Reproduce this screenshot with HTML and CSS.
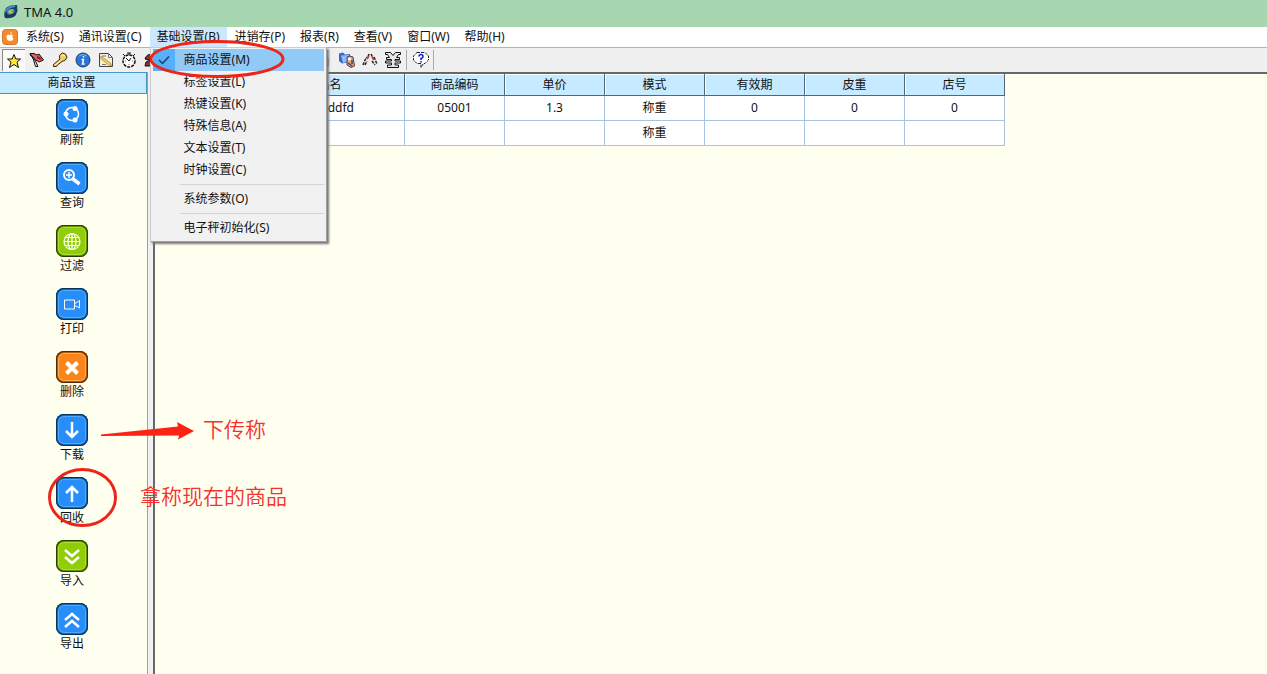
FILE: index.html
```html
<!DOCTYPE html>
<html lang="zh-CN">
<head>
<meta charset="utf-8">
<title>TMA 4.0</title>
<link rel="stylesheet" href="styles.css">
</head>
<body>
<header class="titlebar">
  <svg class="logo" viewBox="0 0 16 16" width="16" height="16"><path d="M3 4Q6 1 14 1Q15 5 13 11Q9 15 2 14Q0 11 3 4Z" fill="#1d4258"/><path d="M2 8Q4 3 12 2" stroke="#3e91c5" stroke-width="2" fill="none"/><ellipse cx="8" cy="8" rx="4" ry="3" fill="#3a8fcf"/><path d="M5 8Q6 5 11 5L9 7L11 9L7 10Z" fill="#b8b851"/><path d="M2 12Q10 13 14 6" stroke="#163c66" stroke-width="2" fill="none"/></svg>
  <h1 class="title">TMA 4.0</h1>
</header>
<nav class="menubar">
  <svg class="app" viewBox="0 0 16 16" width="16" height="16"><rect x=".5" y=".5" width="15" height="15" rx="3" fill="#f58a2b" stroke="#d5772b"/><path d="M8 6Q5 4.500 4.500 7.500Q4.500 11 7 12L8 11.500L9.500 12Q11 11 11.500 9.500Q9.500 8.500 11 6.500Q10 5 8 6ZM8 5Q8 3 10 3Q10 5 8 5Z" fill="#fff"/></svg>
  <button class="menu">系统(S)</button>
  <button class="menu">通讯设置(C)</button>
  <div class="menu-host">
    <button class="menu open" aria-expanded="true">基础设置(B)</button>
    <div class="dropdown" role="menu">
      <button class="item checked" role="menuitem"><span class="tick"><svg viewBox="0 0 12 12" width="12" height="12"><path d="M1 6L4.500 9.500L11 2.500" fill="none" stroke="#1b3f66" stroke-width="1.500"/></svg></span>商品设置(M)</button>
      <button class="item" role="menuitem">标签设置(L)</button>
      <button class="item" role="menuitem">热键设置(K)</button>
      <button class="item" role="menuitem">特殊信息(A)</button>
      <button class="item" role="menuitem">文本设置(T)</button>
      <button class="item" role="menuitem">时钟设置(C)</button>
      <hr class="rule">
      <button class="item" role="menuitem">系统参数(O)</button>
      <hr class="rule">
      <button class="item" role="menuitem">电子秤初始化(S)</button>
    </div>
  </div>
  <button class="menu">进销存(P)</button>
  <button class="menu">报表(R)</button>
  <button class="menu">查看(V)</button>
  <button class="menu">窗口(W)</button>
  <button class="menu">帮助(H)</button>
</nav>
<div class="toolbar">
  <button class="tool pressed" aria-label="收藏"><svg viewBox="0 0 16 16"><path d="M8 1.500L9.800 6H14.500L11 9.200L12.500 14.500L8 11.500L3.500 14.500L5 9.200L1.500 6H6.200Z" fill="#ffe92e" stroke="#111"/></svg></button>
  <button class="tool" aria-label="标记"><svg viewBox="0 0 16 16"><path d="M1 1.500H5L8 3L10 2L14.500 8L10 10L7 8L5 8Z" fill="#d9606e" stroke="#111"/><path d="M1 2.500L5 6L9 14.500H6.500L4 6Z" fill="#f5dede" stroke="#111"/><path d="M8 5L12 7" stroke="#a11b2d" stroke-width="2"/></svg></button>
  <button class="tool" aria-label="密钥"><svg viewBox="0 0 16 16"><path d="M8 7L1.500 12.500V14.500H4.500L5.500 13L10 9.500Q14 9 15 5Q14 1 10.500 1Q6 3 8 7Z" fill="#f3cf66" stroke="#33270c"/><path d="M10 3L13 4M3 13L8 9" stroke="#fff2ad"/></svg></button>
  <button class="tool" aria-label="信息"><svg viewBox="0 0 16 16"><circle cx="8" cy="8" r="7" fill="#2875d6" stroke="#174278"/><path d="M4 4Q8 1 12 4" stroke="#79b5f4" fill="none"/><path d="M6.500 7.500H8.500L7.500 12H9.500M8.500 4V5.500" stroke="#fff" stroke-width="1.500" fill="none"/></svg></button>
  <button class="tool" aria-label="编辑"><svg viewBox="0 0 16 16"><path d="M1.500 1.500H10.500L14.500 5.500V14.500H1.500Z" fill="#f2efdf" stroke="#444"/><path d="M10.500 1.500V5.500H14.500M4 4H8M4 12.500H8" stroke="#777" fill="none"/><path d="M3 4L13 11.500L13.500 13.500L11.500 13.500L2.500 6.500Z" fill="#f1cd58" stroke="#a68236" stroke-width=".7"/></svg></button>
  <button class="tool" aria-label="时钟"><svg viewBox="0 0 16 16"><circle cx="8" cy="9" r="6" fill="#fff" stroke="#111" stroke-width="1.500" stroke-dasharray="3 1"/><path d="M6 1H10M8 1V3M2 2L4 4M14 2L12 4M5 6L8 9L10 6" stroke="#111" fill="none"/><path d="M8 12V13M4 9H5M11 9H12" stroke="#c44"/></svg></button>
  <button class="tool" aria-label="电话"><svg viewBox="0 0 16 16"><path d="M1 7Q2 2 9 2L11 5H7L5 8ZM2 10L6 8L9 14H1Z" fill="#833" stroke="#111"/></svg></button>
  <span class="covered"></span>
  <button class="tool" aria-label="打印"><svg viewBox="0 0 16 16"><path d="M3 5L8 2L12 6V14H4Z" fill="#7890ba" stroke="#222b48"/><path d="M8 7V12M10 9V13" stroke="#eee"/></svg></button>
  <button class="tool" aria-label="资料"><svg viewBox="0 0 16 16"><path d="M0 1.500L4 .5L6 2.500L11 2V10L3 11.500L0 9Z" fill="#3869c6"/><path d="M2 3.500L10 3V9L4 11Z" fill="#95bbf5"/><path d="M8 5Q11 3 14 5L15.500 14L12 15.500L8 13Z" fill="#e9a15d" stroke="#4a4264"/><circle cx="10.500" cy="7" r="1.500" fill="#fff"/><path d="M9 11L13 14M13 8V12" stroke="#39458f" stroke-width="1.500"/></svg></button>
  <button class="tool" aria-label="统计"><svg viewBox="0 0 16 16"><path d="M1 13L3 8L5 5M3 13L5 9M7 2L6 5M9 2L11 6M12 5L15 12M10 9L13 13" stroke="#222" stroke-width="1.500" stroke-dasharray="3 1" fill="none"/><path d="M5 7L7 4M10 5L12 8" stroke="#b33d3d" stroke-width="1.500"/></svg></button>
  <button class="tool" aria-label="价格"><svg viewBox="0 0 16 16"><path d="M.5 .5H5.500L8 3.500L10.500 .5H15.500V2.500H13.500L11.500 5.500H14.500V7.500H10V9H15.500V11H10V13H13.500V15.500H2.500V13H6.500V11H.5V9H6.500V7.500H1.500V5.500H4.500L2.500 2.500H.5Z" fill="#e8e8e8" stroke="#111"/></svg></button>
  <span class="divider"></span>
  <button class="tool" aria-label="帮助"><svg viewBox="0 0 16 16"><path d="M4 .5H12L15.500 4V8L12 11.500H10.500L8 15.500V11.500H4L.5 8V4Z" fill="#fff" stroke="#222" stroke-dasharray="3 1"/><path d="M6 4.500Q6 2.500 8 2.500Q10 2.500 10 4.500Q10 6 8 6.500V8M8 9V10.500" stroke="#1218d8" stroke-width="1.500" fill="none"/></svg></button>
  <span class="divider end"></span>
</div>
<main class="workspace">
  <aside class="side">
    <h2 class="side-title">商品设置</h2>
    <div class="actions">
      <button class="action"><svg class="tile blue" viewBox="0 0 32 32"><circle cx="16" cy="15" r="6.500" fill="none" stroke="#fff" stroke-width="1.500"/><circle cx="10" cy="15" r="2.500"/><circle cx="19" cy="9.500" r="2.500"/><circle cx="19" cy="21" r="2.500"/></svg>刷新</button>
      <button class="action"><svg class="tile blue" viewBox="0 0 32 32"><circle cx="13" cy="13" r="5" fill="none" stroke="#fff" stroke-width="2"/><path d="M10 13H16M13 10V16" stroke="#fff" stroke-width="1.500"/><path d="M17 17L23.500 22" stroke="#fff" stroke-width="3.500"/></svg>查询</button>
      <button class="action"><svg class="tile green" viewBox="0 0 32 32"><g fill="none" stroke="#fff" stroke-width="1.200"><circle cx="16" cy="16.500" r="8"/><ellipse cx="16" cy="16.500" rx="4" ry="8"/><path d="M16 8.500V24.500M8 16.500H24M9 12.500H23M9 20.500H23"/></g></svg>过滤</button>
      <button class="action"><svg class="tile blue" viewBox="0 0 32 32"><path d="M8.500 12H18.500V21H8.500ZM18.500 15H20L23.500 12.500V20L20 18H18.500" fill="none" stroke="#fff"/></svg>打印</button>
      <button class="action"><svg class="tile orange" viewBox="0 0 32 32"><path d="M10.500 11.500L21.500 22.500M21.500 11.500L10.500 22.500" stroke="#fff" stroke-width="4"/></svg>删除</button>
      <button class="action"><svg class="tile blue" viewBox="0 0 32 32"><path d="M16 8V23M10 17L16 23L22 17" fill="none" stroke="#fff" stroke-width="2.500"/></svg>下载</button>
      <button class="action"><svg class="tile blue" viewBox="0 0 32 32"><path d="M16 25V10M10 16L16 10L22 16" fill="none" stroke="#fff" stroke-width="2.500"/></svg>回收</button>
      <button class="action"><svg class="tile green" viewBox="0 0 32 32"><path d="M9 10L16 16L23 10M9 17L16 23L23 17" fill="none" stroke="#fff" stroke-width="2.500"/></svg>导入</button>
      <button class="action"><svg class="tile blue" viewBox="0 0 32 32"><path d="M9 17L16 11L23 17M9 24L16 18L23 24" fill="none" stroke="#fff" stroke-width="2.500"/></svg>导出</button>
    </div>
  </aside>
  <div class="splitter"></div>
  <section class="content">
    <table class="grid">
      <colgroup><col class="first"><col class="name"><col><col><col><col><col><col></colgroup>
      <thead><tr><th></th><th>品名</th><th>商品编码</th><th>单价</th><th>模式</th><th>有效期</th><th>皮重</th><th>店号</th></tr></thead>
      <tbody>
        <tr><td></td><td class="tail">ddfd</td><td>05001</td><td>1.3</td><td>称重</td><td>0</td><td>0</td><td>0</td></tr>
        <tr><td></td><td></td><td></td><td></td><td>称重</td><td></td><td></td><td></td></tr>
      </tbody>
    </table>
  </section>
</main>
<svg class="marks" width="300" height="540" viewBox="0 0 300 540"><g fill="none" stroke="#ee2418" stroke-width="3"><ellipse cx="217" cy="59" rx="66" ry="17.500"/><ellipse cx="82.500" cy="497.500" rx="33" ry="28"/></g><path d="M101 434.500L178 426.500L177 422L194 431L178 439.500L179 435.500L101 436Z" fill="#fb2314"/></svg>
<p class="note download">下传称</p>
<p class="note collect">拿称现在的商品</p>
</body>
</html>
```
FILE: styles.css
```css
* { box-sizing: border-box; }
body {
  margin: 0;
  min-height: 100vh;
  display: flex;
  flex-direction: column;
  position: relative;
  background: #fffff0;
  color: #111;
  font: 12px/18px "Noto Sans", "Noto Sans CJK SC", sans-serif;
}
button {
  border: 0;
  padding: 0;
  background: none;
  color: inherit;
  font: inherit;
}
svg { display: block; flex: none; }
.titlebar {
  height: 27px;
  display: flex;
  align-items: center;
  gap: 5px;
  padding: 0 3px 4px;
  background: #a6d7b1;
}
.title { margin: 0; font: inherit; font-size: 13px; }
.menubar {
  height: 20px;
  display: flex;
  align-items: stretch;
  gap: 1px;
  background: #fff;
}
.app { align-self: center; margin: 0 0 0 2px; }
.menu { height: 20px; padding: 0 7px; white-space: nowrap; }
.menu-host { position: relative; }
.open { background: #cce8ff; }
.dropdown {
  position: absolute;
  z-index: 2;
  top: 20px;
  left: 0;
  width: 177px;
  padding: 1px 2px 2px;
  border: 1px solid #a0a0a0;
  border-left-color: #ccc;
  border-top-color: #ccc;
  background: #f1f1f1;
  box-shadow: 2px 2px 2px #777;
}
.item {
  position: relative;
  display: flex;
  align-items: center;
  width: 100%;
  height: 22px;
  padding-left: 31px;
  white-space: nowrap;
}
.checked { background: #91c9f7; }
.tick {
  position: absolute;
  inset: 0 auto 0 0;
  width: 22px;
  display: grid;
  place-items: center;
  background: #56b0fa;
}
.rule {
  height: 1px;
  margin: 3px 0 3px 27px;
  border: 0;
  background: #d4d4d4;
}
.toolbar {
  height: 25px;
  display: flex;
  align-items: center;
  padding: 0 2px;
  border-top: 1px solid #b4b4b4;
  background: #f0f0f0;
}
.tool {
  width: 23px;
  height: 22px;
  display: grid;
  place-items: center;
}
.tool svg { width: 16px; height: 16px; }
.pressed {
  background: #fafafa;
  border-left: 1px solid #888;
  border-top: 1px solid #888;
}
.covered { width: 149px; }
.divider { width: 1px; height: 20px; margin: 0 2px; background: #aaa; }
.end { margin: 0 0 0 1px; }
.workspace { flex: 1; display: flex; }
.side { width: 147px; flex: none; }
.side-title {
  margin: 0;
  height: 22px;
  padding-right: 3px;
  border: 1px solid #4795c7;
  border-left: 0;
  background: #c6eaff;
  font: inherit;
  line-height: 20px;
  text-align: center;
}
.actions {
  display: flex;
  flex-direction: column;
  align-items: center;
  gap: 13px;
  padding: 5px 3px 16px 0;
}
.action { width: 32px; height: 50px; display: block; text-align: center; }
.tile {
  width: 32px;
  height: 32px;
  border-radius: 8px;
  fill: #fff;
}
.blue { background: #278df8; box-shadow: inset 0 0 0 1px #093357, inset 0 0 0 2px #1969b2, inset 0 0 0 3px #50a9fa; }
.green { background: #91cc08; box-shadow: inset 0 0 0 1px #293e00, inset 0 0 0 2px #659300, inset 0 0 0 3px #afdf37; }
.orange { background: #fa861b; box-shadow: inset 0 0 0 1px #552800, inset 0 0 0 2px #b65c09, inset 0 0 0 3px #ffad55; }
.splitter {
  width: 8px;
  flex: none;
  border-left: 1px solid #a0a0a0;
  border-right: 2px solid #696969;
  background: #f0f0f0;
}
.content { flex: 1; min-width: 0; border-top: 2px solid #616969; }
.grid {
  width: 850px;
  table-layout: fixed;
  border-spacing: 0;
  background: #fff;
  line-height: 18px;
  text-align: center;
}
.name { width: 150px; }
.grid th {
  height: 22px;
  padding: 0;
  border-right: 1px solid #536873;
  border-bottom: 1px solid #536873;
  background: #c6eaff;
  box-shadow: inset 1px 1px #fff;
  font-weight: normal;
}
.grid td {
  height: 25px;
  padding: 0;
  border-right: 1px solid #a9c4e2;
  border-bottom: 1px solid #a9c4e2;
}
.grid .tail { padding-right: 50px; text-align: right; }
.marks { position: absolute; z-index: 3; top: 0; left: 0; pointer-events: none; }
.note {
  position: absolute;
  z-index: 3;
  margin: 0;
  color: #f0332c;
  font-size: 21px;
  line-height: 30px;
  font-weight: 350;
  white-space: nowrap;
}
.download { top: 414px; left: 203px; }
.collect { top: 481px; left: 140px; }
```
